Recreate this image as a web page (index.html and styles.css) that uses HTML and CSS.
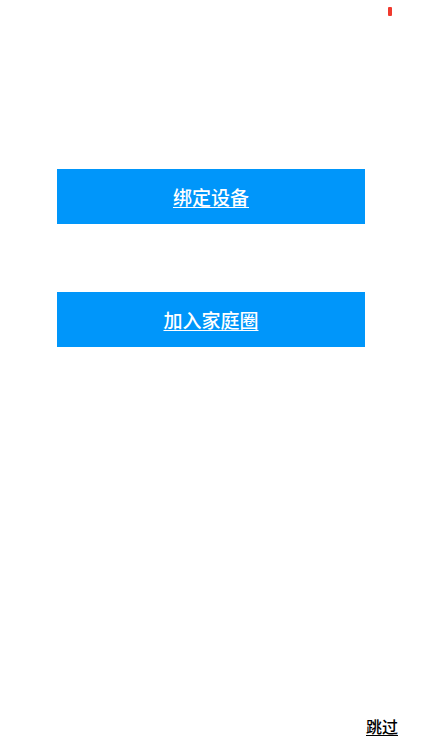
FILE: index.html
```html
<!DOCTYPE html>
<html lang="zh">
<head>
<meta charset="utf-8">
<link rel="stylesheet" href="styles.css">
</head>
<body>
<div class="page">
  <span class="indicator"></span>
  <div class="actions">
    <a class="btn" href="#">绑定设备</a>
    <a class="btn" href="#">加入家庭圈</a>
  </div>
  <div class="footer">
    <a class="skip" href="#">跳过</a>
  </div>
</div>
</body>
</html>
```
FILE: styles.css
```css
html, body {
  margin: 0;
  padding: 0;
  background: #ffffff;
}
.page {
  position: relative;
  width: 422px;
  height: 750px;
  display: flex;
  flex-direction: column;
  font-family: "Noto Sans CJK SC", "Noto Sans", sans-serif;
}
.indicator {
  position: absolute;
  left: 388px;
  top: 7px;
  width: 4px;
  height: 9px;
  background: #f03a2e;
  border-radius: 1px;
}
.actions {
  display: flex;
  flex-direction: column;
  align-items: center;
  gap: 68px;
  padding-top: 169px;
}
.btn {
  width: 308px;
  height: 55px;
  display: flex;
  align-items: center;
  justify-content: center;
  background: #0096fa;
  color: #ffffff;
  font-size: 19px;
  font-weight: 500;
  text-decoration: underline;
  text-underline-offset: 2px;
}
.footer {
  margin-top: auto;
  display: flex;
  justify-content: flex-end;
  padding: 0 24px 12px 0;
}
.skip {
  color: #000000;
  font-size: 16px;
  font-weight: 500;
  text-decoration: underline;
  text-underline-offset: 2px;
}
```
